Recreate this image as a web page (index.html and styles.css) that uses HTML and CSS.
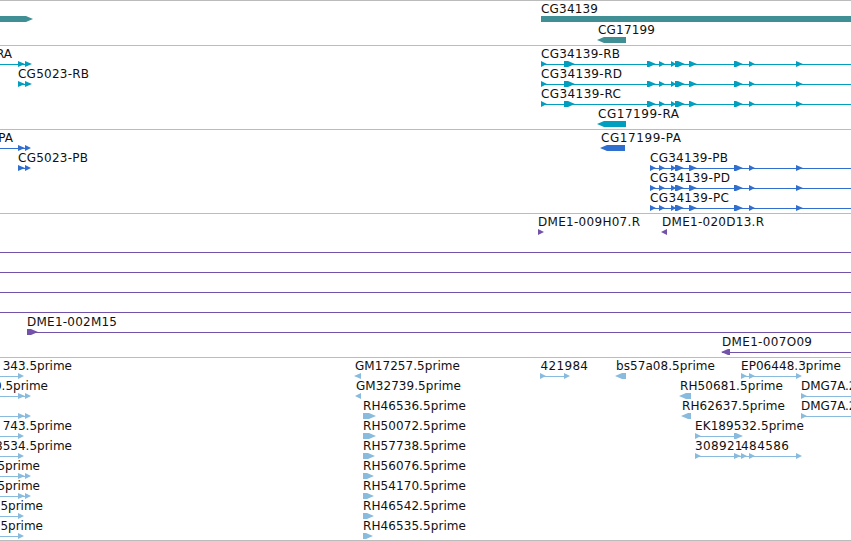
FILE: index.html
```html
<!DOCTYPE html>
<html lang="en">
<head>
  <meta charset="UTF-8" />
  <title>Genome tracks</title>
  <link rel="stylesheet" href="styles.css">
</head>
<body>
  <main id="tracks"></main>
  <script src="tracks.js"></script>
</body>
</html>
```
FILE: styles.css
```css
body {
  margin: 0;
  background: #fff;
  overflow: hidden;
}

#tracks {
  display: flex;
  flex-direction: column;
  border-bottom: 1px solid #bbb;
}

.track {
  border-top: 1px solid #bbb;
}

.track svg {
  display: block;
  width: 851px;
}

.label {
  font-family: "DejaVu Sans", Verdana, sans-serif;
  font-size: 12px;
  fill: #111;
}

.gene { fill: #3f8f94; }
.transcript { fill: #009fbf; }
.protein { fill: #306fd0; }
.clone { fill: #7353a9; }
.est { fill: #88bbdd; }
```
FILE: tracks.js
```javascript
// label: [text, x, width], a width of 0 means x is the right edge
// line:  [from, to]
// boxes: [from, to], from > to points left
const rnaExons = [[541, 547], [564, 575], [647, 656], [659, 665], [671, 676], [675, 685], [689, 697], [734, 743], [749, 755], [796, 803]];
const cdsExons = [[650, 656], [659, 665], [671, 676], [675, 684], [689, 697], [734, 743], [749, 755], [796, 803]];

const tracks = [
  { type: 'gene', height: 44, rows: [
    { y: 0, bars: [[541, 851]], boxes: [[-10, 33]], labels: [['CG34139', 541, 57]] },
    { y: 21, boxes: [[626, 597]], labels: [['CG17199', 598, 57]] }
  ]},
  { type: 'transcript', height: 83, rows: [
    { y: 0, lines: [[0, 25], [541, 851]], boxes: [[18, 25], [25, 32], ...rnaExons], labels: [['RA', 12, 0], ['CG34139-RB', 541, 79]] },
    { y: 20, lines: [[18, 25], [541, 851]], boxes: [[18, 25], [25, 32], ...rnaExons], labels: [['CG5023-RB', 18, 71], ['CG34139-RD', 541, 81]] },
    { y: 40, lines: [[541, 851]], boxes: rnaExons, labels: [['CG34139-RC', 541, 80]] },
    { y: 60, boxes: [[626, 597]], labels: [['CG17199-RA', 598, 81]] }
  ]},
  { type: 'protein', height: 83, rows: [
    { y: 0, lines: [[0, 25]], boxes: [[18, 25], [25, 31], [625, 600]], labels: [['PA', 13, 0], ['CG17199-PA', 601, 80]] },
    { y: 20, lines: [[18, 25], [650, 851]], boxes: [[18, 25], [25, 31], ...cdsExons], labels: [['CG5023-PB', 18, 70], ['CG34139-PB', 650, 78]] },
    { y: 40, lines: [[650, 851]], boxes: cdsExons, labels: [['CG34139-PD', 650, 80]] },
    { y: 60, lines: [[650, 851]], boxes: cdsExons, labels: [['CG34139-PC', 650, 79]] }
  ]},
  { type: 'clone', height: 143, rows: [
    { y: 0, boxes: [[538, 544], [667, 661]], labels: [['DME1-009H07.R', 538, 102], ['DME1-020D13.R', 662, 102]] },
    { y: 20, lines: [[0, 851]] },
    { y: 40, lines: [[0, 851]] },
    { y: 60, lines: [[0, 851]] },
    { y: 80, lines: [[0, 851]] },
    { y: 100, lines: [[27, 851]], boxes: [[27, 38]], labels: [['DME1-002M15', 27, 90]] },
    { y: 120, lines: [[722, 851]], boxes: [[730, 721]], labels: [['DME1-007O09', 722, 90]] }
  ]},
  { type: 'est', height: 182, rows: [
    { y: 0, lines: [[0, 20], [540, 566], [741, 799]],
      boxes: [[18, 24], [361, 354], [540, 546], [564, 570], [626, 615], [741, 747], [749, 755], [796, 802]],
      labels: [['343.5prime', 72, 0], ['GM17257.5prime', 355, 105], ['421984', 540.5, 47.5], ['bs57a08.5prime', 616, 99], ['EP06448.3prime', 741, 100]] },
    { y: 20, lines: [[0, 28], [801, 851]], boxes: [[18, 25], [25, 31], [361, 355], [691, 679], [801, 807]],
      labels: [['0.5prime', 48, 0], ['GM32739.5prime', 356, 105], ['RH50681.5prime', 680, 103], ['DMG7A.2', 801, 55.5]] },
    { y: 40, lines: [[0, 28], [801, 851]], boxes: [[18, 25], [25, 31], [363, 376], [691, 681], [801, 807]],
      labels: [['RH46536.5prime', 363, 103], ['RH62637.5prime', 682, 103], ['DMG7A.2', 801, 55.5]] },
    { y: 60, lines: [[0, 20], [695, 740]], boxes: [[18, 24], [363, 376], [695, 701], [734, 743]],
      labels: [['743.5prime', 72, 0], ['RH50072.5prime', 363, 103], ['EK189532.5prime', 695, 109]] },
    { y: 80, lines: [[0, 20], [695, 799]], boxes: [[18, 24], [363, 375], [695, 701], [734, 741], [741, 747], [749, 755], [796, 802]],
      labels: [['8534.5prime', 72, 0], ['RH57738.5prime', 363, 103], ['308921', 695, 47.5], ['484586', 741, 48]] },
    { y: 100, lines: [[0, 28]], boxes: [[18, 25], [25, 31], [363, 374]], labels: [['5prime', 40, 0], ['RH56076.5prime', 363, 103]] },
    { y: 120, lines: [[0, 28]], boxes: [[18, 25], [25, 31], [363, 374]], labels: [['5prime', 40, 0], ['RH54170.5prime', 363, 103]] },
    { y: 140, lines: [[0, 20]], boxes: [[18, 24], [363, 374]], labels: [['5prime', 43, 0], ['RH46542.5prime', 363, 103]] },
    { y: 160, lines: [[0, 20]], boxes: [[18, 24], [363, 373]], labels: [['5prime', 43, 0], ['RH46535.5prime', 363, 103]] }
  ]}
];

function arrow(from, to) {
  const dir = to > from ? 1 : -1;
  const neck = to - dir * Math.min(7, Math.abs(to - from));
  return `<path d="M${from} 15H${neck}L${to} 18L${neck} 21H${from}z"/>`;
}

function label([text, x, width]) {
  const fit = width ? `textLength="${width}"` : 'text-anchor="end"';
  return `<text class="label" x="${x}" y="12" ${fit}>${text}</text>`;
}

function row({ y, bars = [], lines = [], boxes = [], labels = [] }) {
  return `<g transform="translate(0 ${y})">` +
    bars.map(([a, b]) => `<rect x="${a}" y="15" width="${b - a}" height="6"/>`).join('') +
    lines.map(([a, b]) => `<rect x="${a}" y="18" width="${b - a}" height="1"/>`).join('') +
    boxes.map(([a, b]) => arrow(a, b)).join('') +
    labels.map(label).join('') + '</g>';
}

document.getElementById('tracks').innerHTML = tracks.map(t =>
  `<section class="track ${t.type}"><svg height="${t.height}">${t.rows.map(row).join('')}</svg></section>`
).join('');
```
